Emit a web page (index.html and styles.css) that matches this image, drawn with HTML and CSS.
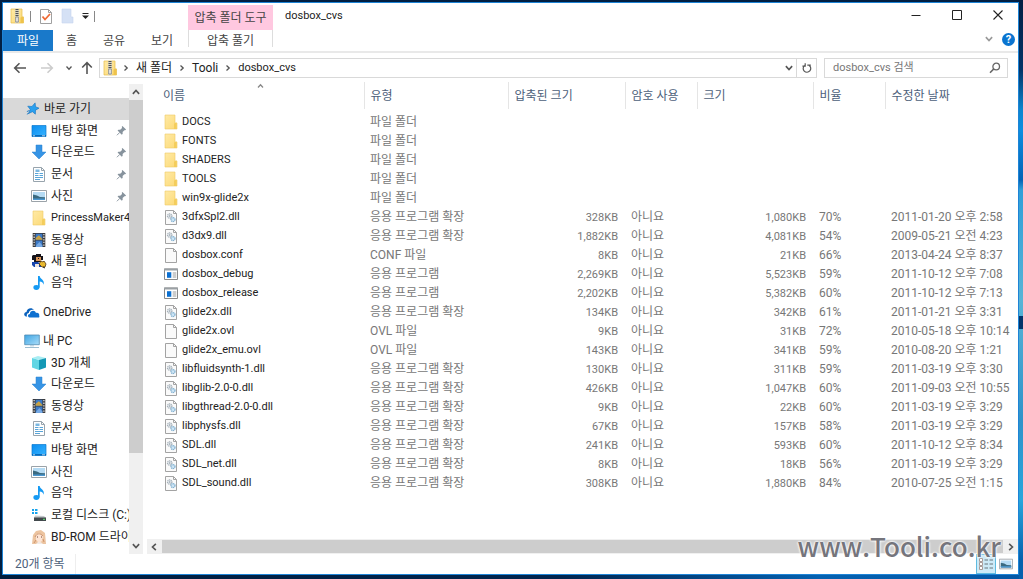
FILE: index.html
```html
<!DOCTYPE html>
<html lang="ko">
<head>
<meta charset="utf-8">
<title>dosbox_cvs</title>
<link rel="stylesheet" href="styles.css">
</head>
<body>
<svg class="defs" aria-hidden="true">
  <defs>
    <linearGradient id="gFolder" x1="0" y1="0" x2="1" y2="1"><stop offset="0" stop-color="#ffeaa6"/><stop offset="1" stop-color="#fcd975"/></linearGradient>
    <linearGradient id="gScreen" x1="0" y1="0" x2="1" y2="1"><stop offset="0" stop-color="#0a8df0"/><stop offset="1" stop-color="#38b4ff"/></linearGradient>
    <linearGradient id="gPc" x1="0" y1="0" x2="1" y2="1"><stop offset="0" stop-color="#3fa6e4"/><stop offset="1" stop-color="#a9dcf8"/></linearGradient>
  </defs>
  <symbol id="folder" viewBox="0 0 16 16"><path d="M2 1h10v8h2v6H2z" fill="url(#gFolder)" stroke="#eecb66" stroke-width=".6"/><path d="M11 9.5 13.6 8.5V15H11z" fill="#f4cd5c"/></symbol>
  <symbol id="zip" viewBox="0 0 16 16"><path d="M2 1h11v8h1.5v6H2z" fill="url(#gFolder)" stroke="#e6bd49" stroke-width=".7"/><path d="M11.5 9.5 14.3 8.5V15h-2.8z" fill="#efc34a"/><path d="M6 1h4v14H6z" fill="#d9d4bd"/><path d="M8 1v8" stroke="#555" stroke-width="3" stroke-dasharray="1 1"/><path d="M6.7 9h2.6v5H6.7z" fill="#eee" stroke="#777" stroke-width=".7"/></symbol>
  <symbol id="page" viewBox="0 0 16 16"><path d="M2.5 1.500h8l3 3v11h-11z" fill="#fafafa" stroke="#a3a3a3"/><path d="M10.500 1.500v3h3" fill="none" stroke="#a3a3a3"/></symbol>
  <symbol id="dll" viewBox="0 0 16 16"><path d="M2.500 1.500h8l3 3v11h-11z" fill="#fafafa" stroke="#a3a3a3"/><path d="M10.500 1.500v3h3" fill="none" stroke="#a3a3a3"/><circle cx="6.700" cy="7" r="2.200" fill="#e9eef2" stroke="#a5b0b8" stroke-width="1.300" stroke-dasharray="1.200 .5"/><circle cx="6.700" cy="7" r=".8" fill="#8e9ba5"/><circle cx="10" cy="10.600" r="2" fill="#cfe6f6" stroke="#83b1d0" stroke-width="1.300" stroke-dasharray="1.200 .5"/></symbol>
  <symbol id="exe" viewBox="0 0 16 16"><path d="M1.500 3h13v10.500h-13z" fill="#fff" stroke="#8a8a8a"/><path d="M1 2.500h14v2H1z" fill="#9aa0a4"/><path d="M4 6.200h4.300v5.600H4z" fill="#0b70d2"/><path d="M9.700 7h3.600M9.700 9h3.600M9.700 11h3.600" stroke="#9a9a9a"/></symbol>
  <symbol id="desktop" viewBox="0 0 16 16"><path d="M1 2.5h14v11H1z" fill="url(#gScreen)" stroke="#0878ce" stroke-width=".7"/><path d="M1 12h14v1.5H1z" fill="#076bbb"/><path d="M2 12.8h2M11 12.8h3" stroke="#fff" stroke-width=".7"/></symbol>
  <symbol id="down" viewBox="0 0 16 16"><path d="M5 1h6v7h4L8 15 1 8h4z" fill="#3694e5" stroke="#2b80ce" stroke-width=".5"/></symbol>
  <symbol id="doc" viewBox="0 0 16 16"><path d="M2.500 1.500h8l3 3v11h-11z" fill="#fff" stroke="#98a4ad"/><path d="M10.500 1.500v3h3" fill="none" stroke="#98a4ad"/><path d="M4 7.500h3.500M8.500 7.500H12M4 9.500h3.500M8.500 9.500H12M4 11.500h8M4 13.500h5" stroke="#5aa5d8"/><path d="M4.500 3.500h4v2.500h-4z" fill="#79b7e1"/></symbol>
  <symbol id="photo" viewBox="0 0 16 16"><path d="M.5 2.500h15v11H.5z" fill="#fff" stroke="#9ba3a9"/><path d="M2 4h12v8H2z" fill="#b5dbf4"/><path d="m2 6.500 4 1 3 1.500 5 .3V12H2z" fill="#3a6a80"/><path d="M2 10.500h12V12H2z" fill="#4a97d0"/></symbol>
  <symbol id="video" viewBox="0 0 16 16"><path d="M1.7 1h12.6v14H1.7z" fill="#39393b"/><path d="M4.6 1.7h6.8v6H4.6zM4.6 8.5h6.8V15H4.6z" fill="#3b79c6"/><path d="m4.6 6 3.3-2.7L11.4 7v.7H4.6z" fill="#c9a242"/><path d="M5 13.5 8.5 10l2.9 3.5V15H5z" fill="#76a9e4"/><path d="M3.1 2v12M12.9 2v12" stroke="#eee" stroke-width="1.2" stroke-dasharray="1.3 1.3"/></symbol>
  <symbol id="hero" viewBox="0 0 16 16"><path d="M2 2h3V1h5v2h2v4h-2v2H3V7H1V3z" fill="#15131a"/><path d="M5 4h5v4H5z" fill="#d99558"/><path d="M7 5h1v1H7z" fill="#15131a"/><path d="M1 9h6l3 2v3H3l-2-2z" fill="#1746ad"/><path d="M4 11h4v3H4z" fill="#ece6e2"/><path d="m10 8 2 1 1-1 2 3-1 3h-3l-3-3z" fill="#e9b92d" stroke="#4e3514" stroke-width=".8"/><path d="m12 14 2 1" stroke="#222"/></symbol>
  <symbol id="music" viewBox="0 0 16 16"><ellipse cx="5.4" cy="12.5" rx="3" ry="2.4" fill="#159af3"/><path d="M7 1h1.7c.2 3 5.200 3.500 4 8.800-.7-2.200-2-3-4-3.200v6H7z" fill="#159af3"/></symbol>
  <symbol id="cloud" viewBox="0 0 16 16"><path d="M1.800 12.600C-.8 11.500 0 8 2.500 8 2.700 4.700 7.500 2.500 10 6c-3-.9-5 1-5.200 3C2.800 9.200 2.200 11.400 3.300 12.600z" fill="#0b62bd"/><path d="M5.600 13.500c-2.300-.5-2-3.700.3-3.600C6 6.300 11 5.600 12 8.900c2.600-.4 3.700 1.400 3.200 3 .5.7.2 1.600-.8 1.600z" fill="#0e70d0"/></symbol>
  <symbol id="pc" viewBox="0 0 16 16"><path d="M.7 2h14.6v9.700H.7z" fill="url(#gPc)" stroke="#508bb2" stroke-width=".8"/><path d="M6 12h4v1.400H6z" fill="#bcd4e2"/><path d="M1 14.500h14" stroke="#9dbdd0"/></symbol>
  <symbol id="cube" viewBox="0 0 16 16"><path d="m1 3 6-2 8 2-6 2z" fill="#a8edf3"/><path d="m1 3 7 2v10l-7-2.500z" fill="#60d6e4"/><path d="m8 5 7-2v9.500L8 15z" fill="#1498b5"/></symbol>
  <symbol id="disk" viewBox="0 0 16 16"><path d="M1 2h2v2H1zM4 2h2.500v2H4zM1 5h2v2H1zM4 5h2.500v2H4z" fill="#16a3ec"/><path d="m4 8.500 9 .5 2 2H3z" fill="#c3c8cb"/><path d="M3 10.500h12V14H3z" fill="#42494d"/><path d="M12 12.300h2" stroke="#5eea73"/></symbol>
  <symbol id="girl" viewBox="0 0 16 16"><path d="M1 15 2 6l3-4 5-1 4 3 1 11z" fill="#ecc4a0"/><path d="m5 6 3-2 4 3-1 5-3 2-3-3z" fill="#fde5d5"/><path d="M4 8c2-4 5-4 8-1M3 14l2-3M13 13l-1-3" fill="none" stroke="#cb9068" stroke-width=".9"/><path d="M6 8h1M10 8h1" stroke="#704334"/><path d="m5 15 2-2 3 .2 2 1.800z" fill="#f3ece8"/></symbol>
  <symbol id="star" viewBox="0 0 16 16"><path d="m10.400 1 .5 4.400 4 1.600-4 2.300-.2 4.600-3.300-2.800-4.400 2 1.900-4.600L2 4.800l4.800.3z" fill="#2aa0ee" stroke="#1573c0" stroke-width=".7"/><path d="m1 11 3-1.400M1 14l2.700-1.600" stroke="#1573c0"/></symbol>
  <symbol id="pin" viewBox="0 0 12 12"><path d="m7 1 4 4-1 .8-.8-.2-2 2 .1 2L6.300 10.500 1.700 6l.9-.9 2 .1 2-2L6.300 2z" fill="#87939d"/><path d="M4.200 8 1 11.200" stroke="#87939d"/></symbol>
  <symbol id="chev" viewBox="0 0 8 8"><path d="m1.500 2.500 2.500 2.700L6.500 2.500" fill="none" stroke="currentColor" stroke-width="1.300"/></symbol>
  <symbol id="arrow" viewBox="0 0 14 14"><path d="M13 7H2M6.500 2.200 1.700 7l4.800 4.800" fill="none" stroke="currentColor" stroke-width="1.600"/></symbol>
</svg>

<div class="window">
  <header class="top">
    <div class="left">
      <div class="quick">
        <svg class="i16"><use href="#zip"/></svg><span class="bar"></span>
        <button class="bare" aria-label="속성"><svg class="i16" viewBox="0 0 16 16"><path d="M2.500 1.500h8l3 3v11h-11z" fill="#fff" stroke="#a0a0a0"/><path d="M10.500 1.500v3h3" fill="none" stroke="#a0a0a0"/><path d="m4.500 8.500 2.500 3 5-5.500" fill="none" stroke="#ef6a35" stroke-width="1.800"/></svg></button>
        <button class="bare" aria-label="새 폴더"><svg class="i16" viewBox="0 0 16 16"><path d="M3 1h9v8h2v6H3z" fill="#d5e1f5" stroke="#c6d5ee" stroke-width=".6"/></svg></button>
        <button class="bare more" aria-label="사용자 지정"><svg viewBox="0 0 7 8"><path d="M.5 1.500h6" stroke="#222"/><path d="M0 3.500h7L3.500 7z" fill="#222"/></svg></button><span class="bar"></span>
      </div>
      <nav class="tabs">
        <button class="file">파일</button><button class="t1">홈</button><button class="t2">공유</button><button class="t3">보기</button>
      </nav>
    </div>
    <div class="context"><div class="pink">압축 폴더 도구</div><button class="extract">압축 풀기</button></div>
    <h1 class="title">dosbox_cvs</h1>
    <div class="right">
      <div class="caption">
        <button class="bare" aria-label="최소화"><svg viewBox="0 0 10 10"><path d="M.5 5.500h9" stroke="#222"/></svg></button>
        <button class="bare" aria-label="최대화"><svg viewBox="0 0 10 10"><path d="M.5.5h9v9h-9z" fill="none" stroke="#222"/></svg></button>
        <button class="bare" aria-label="닫기"><svg viewBox="0 0 10 10"><path d="m.5.5 9 9m0-9-9 9" stroke="#222" stroke-width="1.100"/></svg></button>
      </div>
      <div class="helprow"><button class="bare faint" aria-label="리본 확장"><svg class="i10"><use href="#chev"/></svg></button><button class="help" aria-label="도움말">?</button></div>
    </div>
  </header>

  <div class="address">
    <div class="navs">
      <button class="bare" aria-label="뒤로"><svg class="i14"><use href="#arrow"/></svg></button>
      <button class="bare off" aria-label="앞으로"><svg class="i14 flip"><use href="#arrow"/></svg></button>
      <button class="bare" aria-label="최근 위치"><svg class="i8"><use href="#chev"/></svg></button>
      <button class="bare" aria-label="위로"><svg class="i14 up"><use href="#arrow"/></svg></button>
    </div>
    <div class="path">
      <svg class="i16"><use href="#zip"/></svg>
      <svg class="i8 east"><use href="#chev"/></svg><a href="#">새 폴더</a>
      <svg class="i8 east"><use href="#chev"/></svg><a href="#">Tooli</a>
      <svg class="i8 east"><use href="#chev"/></svg><a class="latin" href="#">dosbox_cvs</a>
      <button class="bare history" aria-label="이전 위치"><svg class="i10"><use href="#chev"/></svg></button>
      <button class="bare refresh" aria-label="새로 고침"><svg viewBox="0 0 10 10"><path d="M7.200 2.400A3.800 3.800 0 1 1 2.600 2.500M3.200.2v3H.4M5.300 2.100h3.500" fill="none" stroke="#555" stroke-width="1.200"/></svg></button>
    </div>
    <label class="search"><input type="text" placeholder="dosbox_cvs 검색" aria-label="dosbox_cvs 검색"><svg viewBox="0 0 12 12"><circle cx="7.200" cy="4.500" r="3.300" fill="none" stroke="#666" stroke-width="1.300"/><path d="M4.800 6.900 1 10.700" stroke="#666" stroke-width="1.500"/></svg></label>
  </div>

  <div class="body">
    <aside class="side">
      <nav class="tree">
        <a class="root sel" href="#"><svg class="i14"><use href="#star"/></svg>바로 가기</a>
        <a href="#"><svg class="i16"><use href="#desktop"/></svg>바탕 화면<svg class="pin"><use href="#pin"/></svg></a>
        <a href="#"><svg class="i16"><use href="#down"/></svg>다운로드<svg class="pin"><use href="#pin"/></svg></a>
        <a href="#"><svg class="i16"><use href="#doc"/></svg>문서<svg class="pin"><use href="#pin"/></svg></a>
        <a href="#"><svg class="i16"><use href="#photo"/></svg>사진<svg class="pin"><use href="#pin"/></svg></a>
        <a class="latin" href="#"><svg class="i16"><use href="#folder"/></svg>PrincessMaker4</a>
        <a href="#"><svg class="i16"><use href="#video"/></svg>동영상</a>
        <a href="#"><svg class="i16"><use href="#hero"/></svg>새 폴더</a>
        <a href="#"><svg class="i16"><use href="#music"/></svg>음악</a>
        <a class="root gap" href="#"><svg class="i16"><use href="#cloud"/></svg>OneDrive</a>
        <a class="root gap" href="#"><svg class="i16"><use href="#pc"/></svg>내 PC</a>
        <a href="#"><svg class="i16"><use href="#cube"/></svg>3D 개체</a>
        <a href="#"><svg class="i16"><use href="#down"/></svg>다운로드</a>
        <a href="#"><svg class="i16"><use href="#video"/></svg>동영상</a>
        <a href="#"><svg class="i16"><use href="#doc"/></svg>문서</a>
        <a href="#"><svg class="i16"><use href="#desktop"/></svg>바탕 화면</a>
        <a href="#"><svg class="i16"><use href="#photo"/></svg>사진</a>
        <a href="#"><svg class="i16"><use href="#music"/></svg>음악</a>
        <a href="#"><svg class="i16"><use href="#disk"/></svg>로컬 디스크 (C:)</a>
        <a href="#"><svg class="i16"><use href="#girl"/></svg>BD-ROM 드라이</a>
      </nav>
      <div class="vscroll"><svg class="i10 north"><use href="#chev"/></svg><div class="vtrack"><div class="vthumb"></div></div><svg class="i10"><use href="#chev"/></svg></div>
    </aside>

    <main class="files">
      <table>
        <colgroup><col class="c1"><col class="c2"><col class="c3"><col class="c4"><col class="c5"><col class="c6"><col></colgroup>
        <thead><tr><th class="name">이름<svg class="sort"><use href="#chev"/></svg></th><th>유형</th><th>압축된 크기</th><th>암호 사용</th><th>크기</th><th>비율</th><th>수정한 날짜</th></tr></thead>
        <tbody>
          <tr><td><span><svg class="i16"><use href="#folder"/></svg>DOCS</span></td><td>파일 폴더</td><td></td><td></td><td></td><td></td><td></td></tr>
          <tr><td><span><svg class="i16"><use href="#folder"/></svg>FONTS</span></td><td>파일 폴더</td><td></td><td></td><td></td><td></td><td></td></tr>
          <tr><td><span><svg class="i16"><use href="#folder"/></svg>SHADERS</span></td><td>파일 폴더</td><td></td><td></td><td></td><td></td><td></td></tr>
          <tr><td><span><svg class="i16"><use href="#folder"/></svg>TOOLS</span></td><td>파일 폴더</td><td></td><td></td><td></td><td></td><td></td></tr>
          <tr><td><span><svg class="i16"><use href="#folder"/></svg>win9x-glide2x</span></td><td>파일 폴더</td><td></td><td></td><td></td><td></td><td></td></tr>
          <tr><td><span><svg class="i16"><use href="#dll"/></svg>3dfxSpl2.dll</span></td><td>응용 프로그램 확장</td><td>328KB</td><td>아니요</td><td>1,080KB</td><td>70%</td><td>2011-01-20 오후 2:58</td></tr>
          <tr><td><span><svg class="i16"><use href="#dll"/></svg>d3dx9.dll</span></td><td>응용 프로그램 확장</td><td>1,882KB</td><td>아니요</td><td>4,081KB</td><td>54%</td><td>2009-05-21 오전 4:23</td></tr>
          <tr><td><span><svg class="i16"><use href="#page"/></svg>dosbox.conf</span></td><td>CONF 파일</td><td>8KB</td><td>아니요</td><td>21KB</td><td>66%</td><td>2013-04-24 오후 8:37</td></tr>
          <tr><td><span><svg class="i16"><use href="#exe"/></svg>dosbox_debug</span></td><td>응용 프로그램</td><td>2,269KB</td><td>아니요</td><td>5,523KB</td><td>59%</td><td>2011-10-12 오후 7:08</td></tr>
          <tr><td><span><svg class="i16"><use href="#exe"/></svg>dosbox_release</span></td><td>응용 프로그램</td><td>2,202KB</td><td>아니요</td><td>5,382KB</td><td>60%</td><td>2011-10-12 오후 7:13</td></tr>
          <tr><td><span><svg class="i16"><use href="#dll"/></svg>glide2x.dll</span></td><td>응용 프로그램 확장</td><td>134KB</td><td>아니요</td><td>342KB</td><td>61%</td><td>2011-01-21 오후 3:31</td></tr>
          <tr><td><span><svg class="i16"><use href="#page"/></svg>glide2x.ovl</span></td><td>OVL 파일</td><td>9KB</td><td>아니요</td><td>31KB</td><td>72%</td><td>2010-05-18 오후 10:14</td></tr>
          <tr><td><span><svg class="i16"><use href="#page"/></svg>glide2x_emu.ovl</span></td><td>OVL 파일</td><td>143KB</td><td>아니요</td><td>341KB</td><td>59%</td><td>2010-08-20 오후 1:21</td></tr>
          <tr><td><span><svg class="i16"><use href="#dll"/></svg>libfluidsynth-1.dll</span></td><td>응용 프로그램 확장</td><td>130KB</td><td>아니요</td><td>311KB</td><td>59%</td><td>2011-03-19 오후 3:30</td></tr>
          <tr><td><span><svg class="i16"><use href="#dll"/></svg>libglib-2.0-0.dll</span></td><td>응용 프로그램 확장</td><td>426KB</td><td>아니요</td><td>1,047KB</td><td>60%</td><td>2011-09-03 오전 10:55</td></tr>
          <tr><td><span><svg class="i16"><use href="#dll"/></svg>libgthread-2.0-0.dll</span></td><td>응용 프로그램 확장</td><td>9KB</td><td>아니요</td><td>22KB</td><td>60%</td><td>2011-03-19 오후 3:29</td></tr>
          <tr><td><span><svg class="i16"><use href="#dll"/></svg>libphysfs.dll</span></td><td>응용 프로그램 확장</td><td>67KB</td><td>아니요</td><td>157KB</td><td>58%</td><td>2011-03-19 오후 3:29</td></tr>
          <tr><td><span><svg class="i16"><use href="#dll"/></svg>SDL.dll</span></td><td>응용 프로그램 확장</td><td>241KB</td><td>아니요</td><td>593KB</td><td>60%</td><td>2011-10-12 오후 8:34</td></tr>
          <tr><td><span><svg class="i16"><use href="#dll"/></svg>SDL_net.dll</span></td><td>응용 프로그램 확장</td><td>8KB</td><td>아니요</td><td>18KB</td><td>56%</td><td>2011-03-19 오후 3:29</td></tr>
          <tr><td><span><svg class="i16"><use href="#dll"/></svg>SDL_sound.dll</span></td><td>응용 프로그램 확장</td><td>308KB</td><td>아니요</td><td>1,880KB</td><td>84%</td><td>2010-07-25 오전 1:15</td></tr>
        </tbody>
      </table>
      <div class="hscroll"><svg class="i10 west"><use href="#chev"/></svg><div class="hthumb"></div><svg class="i10 east"><use href="#chev"/></svg></div>
    </main>
  </div>

  <footer class="status"><span class="count">20개 항목</span>
    <div class="views">
      <button class="view on" aria-label="자세히"><svg class="i16" viewBox="0 0 16 16"><path d="M1.500 2.500h3v3h-3zM1.500 6.500h3v3h-3zM1.500 10.500h3v3h-3z" fill="#fff" stroke="#a99a97"/><path d="M6.500 4h3.500M11.500 4H15M6.500 8h3.500M11.500 8H15M6.500 12h3.500M11.500 12H15" stroke="#68747b"/></svg></button>
      <button class="view" aria-label="큰 아이콘"><svg class="i14"><use href="#photo"/></svg></button>
    </div>
  </footer>
</div>
<div class="watermark">www.Tooli.co.kr</div>
</body>
</html>
```
FILE: styles.css
```css
* { box-sizing: border-box; }
body {
  margin: 0;
  height: 100vh;
  padding: 2px 4px 4px 2px;
  overflow: hidden;
  position: relative;
  background:
    linear-gradient(#02346a, #02346a) right 316px / 4px 13px no-repeat,
    linear-gradient(#021f43 0, #023468 70px, #0a86cf 110px, #0b8ee0 130px, #0363b5 180px, #2f9fd8 190px, #58b4d6 300px, #2f93c9 420px, #27a6dc 500px, #0561ad 560px) right top / 4px 100% no-repeat,
    linear-gradient(90deg, #021d3c 0, #02254e 55%, #0561b0 80%, #0457a5 100%) left bottom / 100% 4px no-repeat,
    #021f42;
  font: 12px/16px Roboto, "Noto Sans CJK KR", "Noto Sans", sans-serif;
  color: #222;
}
button, input { font: inherit; color: inherit; }
button { border: 0; padding: 0; background: none; }
a { color: inherit; text-decoration: none; }
svg { display: block; flex: none; overflow: visible; }
.defs { position: absolute; width: 0; height: 0; }
.latin { font-size: 11px; }
.i16 { width: 16px; height: 16px; }
.i14 { width: 14px; height: 14px; }
.i10 { width: 10px; height: 10px; }
.i8 { width: 8px; height: 8px; }
.flip { transform: rotate(180deg); }
.up { transform: rotate(90deg); }
.east { transform: rotate(-90deg); }
.west { transform: rotate(90deg); }
.north { transform: rotate(180deg); }
.bare { display: flex; align-items: center; justify-content: center; }

.window {
  height: 100%;
  display: flex;
  flex-direction: column;
  background: #fff;
  border: 1px solid #1e84d6;
}
.top { display: flex; height: 50px; flex: none; border-bottom: 2px solid #e9e9e9; }
.left { width: 185px; }
.quick { display: flex; align-items: center; height: 26px; padding-left: 6px; gap: 5px; }
.quick .more { width: 8px; margin-left: 1px; }
.quick .more svg { width: 7px; height: 8px; }
.bar { width: 1px; height: 11px; background: #888; }
.quick .bar + .bare { margin-left: 2px; }
.tabs { display: flex; height: 21px; margin-top: 1px; color: #444; }
.tabs button { height: 21px; }
.file { width: 50px; background: #1979ca; color: #fff; }
.t1 { width: 37px; }
.t2 { width: 48px; }
.t3 { width: 48px; }
.context { width: 85px; padding-top: 2px; color: #444; }
.pink { height: 25px; background: #ffc8e0; text-align: center; line-height: 27px; }
.extract { display: block; width: 100%; height: 17px; border: solid #ddd; border-width: 0 1px; line-height: 22px; }
.title { margin: 0; padding-left: 12px; font-size: 11px; font-weight: 400; line-height: 26px; }
.right { margin-left: auto; display: flex; flex-direction: column; align-items: flex-end; }
.caption { display: flex; height: 26px; }
.caption .bare { width: 41px; }
.caption svg { width: 10px; height: 10px; }
.helprow { display: flex; align-items: center; gap: 8px; height: 24px; padding-right: 3px; }
.faint { color: #999; }
.help { width: 13px; height: 13px; border-radius: 50%; background: #0a74d0; color: #fff; font-size: 11px; font-weight: 700; line-height: 13px; }

.address { display: flex; align-items: center; height: 29px; flex: none; padding-right: 10px; }
.navs { display: flex; align-items: center; width: 96px; padding-left: 10px; gap: 11px; color: #555; }
.navs .off { color: #ccc; margin-left: 2px; }
.navs .bare:last-child { margin-left: -4px; }
.path { flex: 1; display: flex; align-items: center; gap: 6px; height: 20px; padding-left: 2px; border: 1px solid #d9d9d9; color: #555; }
.path a { color: #222; }
.path .i16 { margin-right: -2px; }
.history { margin-left: auto; width: 10px; margin-right: -4px; }
.refresh { width: 20px; height: 18px; border-left: 1px solid #d9d9d9; }
.refresh svg { width: 10px; height: 10px; }
.search { display: flex; align-items: center; width: 184px; height: 20px; margin-left: 7px; padding: 0 6px 0 8px; border: 1px solid #d9d9d9; }
.search input { flex: 1; min-width: 0; border: 0; padding: 0; outline: 0; background: none; font-size: 11px; }
.search input::placeholder { color: #777; opacity: 1; }
.search svg { width: 12px; height: 12px; }

.body { flex: 1; min-height: 0; display: flex; }
.side { display: flex; width: 141px; flex: none; margin-top: 2px; }
.tree { flex: 1; min-width: 0; display: flex; flex-direction: column; padding: 14px 0 6px; }
.tree a { flex: 1; min-height: 0; display: flex; align-items: center; gap: 4px; padding-left: 28px; white-space: nowrap; }
.tree .root { padding-left: 21px; gap: 3px; }
.tree .sel { background: #d9d9d9; padding-left: 23px; gap: 4px; }
.tree .gap { margin-top: 7px; }
.pin { width: 11px; height: 11px; margin-left: auto; margin-right: 2px; }
.vscroll { display: flex; flex-direction: column; align-items: center; width: 14px; margin-right: 1px; padding: 3px 0; background: #f0f0f0; color: #555; }
.vtrack { flex: 1; align-self: stretch; padding-top: 3px; }
.vthumb { height: 80%; background: #cdcdcd; }

.files { flex: 1; min-width: 0; display: flex; flex-direction: column; margin-left: 3px; }
table { width: 100%; table-layout: fixed; border-collapse: collapse; color: #777; }
.c1 { width: 217px; }
.c2 { width: 144px; }
.c3 { width: 117px; }
.c4 { width: 72px; }
.c5 { width: 116px; }
.c6 { width: 72px; }
th { height: 27px; padding: 0 0 0 6px; border-left: 1px solid #e5e5e5; font-weight: 400; text-align: left; color: #4c607a; }
th.name { padding-left: 16px; border-left: 0; position: relative; }
.sort { position: absolute; top: 0; right: 99px; width: 9px; height: 8px; color: #888; transform: rotate(180deg); }
thead::after { content: ""; display: block; height: 3px; }
td { height: 19px; padding: 2px 0 0 6px; white-space: nowrap; line-height: 17px; }
td:first-child { padding: 0 0 0 16px; font-size: 11px; color: #222; }
td span { display: flex; align-items: center; gap: 3px; height: 19px; }
td:nth-child(3), td:nth-child(5) { padding-right: 7px; text-align: right; font-size: 11px; }
.hscroll { display: flex; align-items: center; gap: 3px; height: 15px; margin-top: auto; padding: 0 2px; background: #f0f0f0; color: #555; }
.hthumb { flex: 1; height: 13px; background: #cdcdcd; }

.status { display: flex; justify-content: space-between; height: 20px; flex: none; padding-left: 12px; color: #4c607a; line-height: 20px; }
.count { padding-right: 10px; border-right: 1px solid #eee; }
.views { display: flex; padding-right: 2px; }
.view { display: flex; align-items: center; justify-content: center; width: 20px; height: 20px; }
.view.on { border: 1px solid #5fbbe0; background: #cdeaf7; }
.watermark {
  position: absolute;
  right: 22px;
  bottom: 15px;
  font: 500 26px/36px "Noto Sans CJK KR", sans-serif;
  color: #75757c;
  text-shadow: 0 0 2px #fff, 0 0 2px #fff, 0 0 3px #fff;
  pointer-events: none;
}
```
